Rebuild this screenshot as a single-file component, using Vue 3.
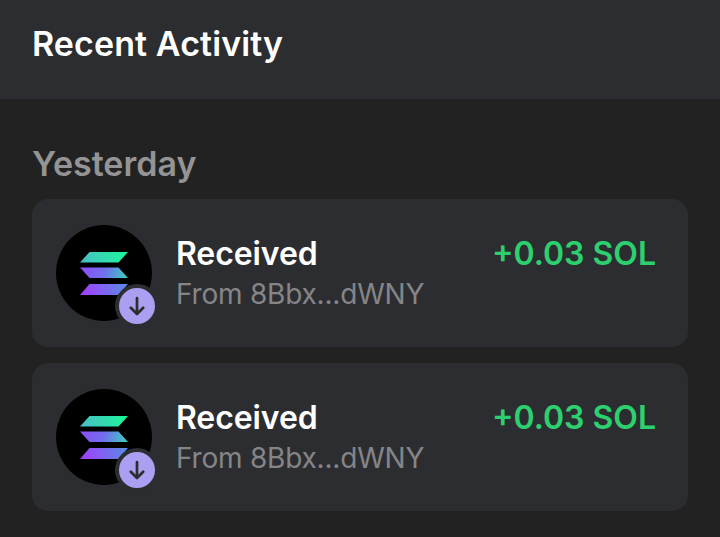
<template>
  <div class="page">
    <header class="top-bar">
      <h1 class="top-bar__title">Recent Activity</h1>
    </header>
    <main class="content">
      <h2 class="content__day">Yesterday</h2>
      <div class="list">
        <div v-for="item in items" :key="item.id" class="card">
          <div class="avatar">
            <svg class="avatar__logo" viewBox="0 0 48 43" width="48" height="43">
              <defs>
                <linearGradient :id="'top' + item.id" gradientUnits="userSpaceOnUse" x1="4" y1="12" x2="44" y2="-2">
                  <stop offset="0" stop-color="#48c0c4" />
                  <stop offset="1" stop-color="#1df59c" />
                </linearGradient>
                <linearGradient :id="'mid' + item.id" gradientUnits="userSpaceOnUse" x1="4" y1="14" x2="44" y2="28">
                  <stop offset="0" stop-color="#8a50f8" />
                  <stop offset="0.5" stop-color="#7070ee" />
                  <stop offset="1" stop-color="#40c8c0" />
                </linearGradient>
                <linearGradient :id="'low' + item.id" gradientUnits="userSpaceOnUse" x1="4" y1="44" x2="44" y2="30">
                  <stop offset="0" stop-color="#a040fc" />
                  <stop offset="1" stop-color="#5a8ae4" />
                </linearGradient>
              </defs>
              <path d="M9.500 0H48L38.500 10.500H0Z" :fill="`url(#top${item.id})`" />
              <path d="M0 15.500H38.500L48 26H9.500Z" :fill="`url(#mid${item.id})`" />
              <path d="M9.500 32H48L38.500 43H0Z" :fill="`url(#low${item.id})`" />
            </svg>
            <span class="avatar__badge">
              <svg viewBox="0 0 20 20" width="20" height="20" fill="none" stroke="#2c2d30" stroke-width="2.700" stroke-linecap="round" stroke-linejoin="round">
                <path d="M10 2V18M3.800 11.800L10 18L16.200 11.800" />
              </svg>
            </span>
          </div>
          <div class="card__text">
            <div class="card__title">{{ item.title }}</div>
            <div class="card__sub">{{ item.from }}</div>
          </div>
          <div class="card__amount">{{ item.amount }}</div>
        </div>
      </div>
    </main>
  </div>
</template>

<script setup>
const items = [
  { id: 1, title: 'Received', from: 'From 8Bbx...dWNY', amount: '+0.03 SOL' },
  { id: 2, title: 'Received', from: 'From 8Bbx...dWNY', amount: '+0.03 SOL' },
];
</script>

<style>
html,
body {
  margin: 0;
  background: #222222;
}
</style>

<style scoped>
.page {
  width: 720px;
  height: 537px;
  overflow: hidden;
  background: #222222;
  font-family: Inter, "Liberation Sans", sans-serif;
}

.top-bar {
  height: 99px;
  box-sizing: border-box;
  padding: 24px 32px 0;
  background: #2c2d30;
}

.top-bar__title {
  margin: 0;
  font-size: 34px;
  line-height: 40px;
  letter-spacing: 0.1px;
  font-weight: 600;
  color: #ffffff;
}

.content {
  padding: 45px 32px 0;
}

.content__day {
  margin: 0 0 15px;
  font-size: 34px;
  line-height: 40px;
  font-weight: 600;
  color: #949494;
}

.list {
  display: flex;
  flex-direction: column;
  gap: 16px;
}

.card {
  display: flex;
  align-items: flex-start;
  height: 148px;
  box-sizing: border-box;
  padding: 26px 32px 26px 24px;
  border-radius: 16px;
  background: #2c2d30;
}

.avatar {
  position: relative;
  flex: none;
  display: flex;
  align-items: center;
  justify-content: center;
  width: 96px;
  height: 96px;
  border-radius: 50%;
  background: #000000;
}

.avatar__badge {
  position: absolute;
  right: -7px;
  bottom: -7px;
  display: flex;
  align-items: center;
  justify-content: center;
  width: 36px;
  height: 36px;
  border: 4px solid #2c2d30;
  border-radius: 50%;
  background: #ab9ff2;
}

.card__text {
  flex: 1;
  margin-left: 24px;
}

.card__title {
  margin-top: 9px;
  font-size: 32px;
  line-height: 40px;
  letter-spacing: -0.1px;
  font-weight: 600;
  color: #ffffff;
}

.card__sub {
  font-size: 28px;
  line-height: 40px;
  letter-spacing: -0.2px;
  color: #858588;
}

.card__amount {
  margin-top: 9px;
  font-size: 32px;
  line-height: 40px;
  font-weight: 600;
  color: #2dd06f;
}
</style>
